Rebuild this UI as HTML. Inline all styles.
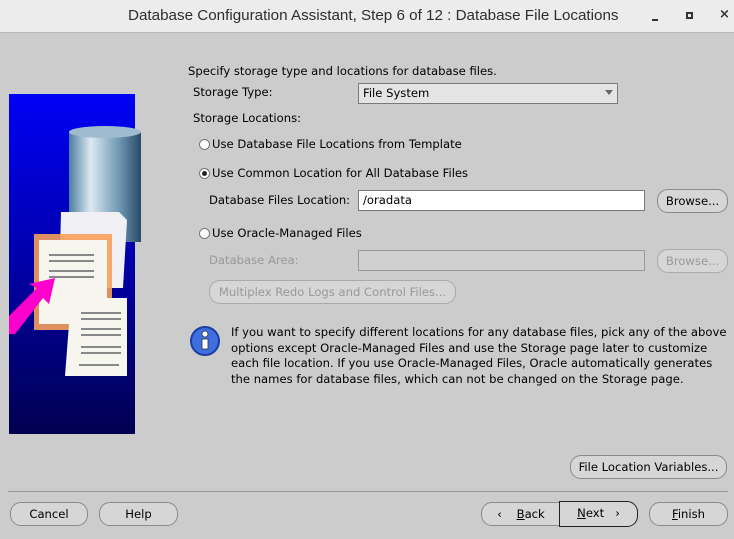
<!DOCTYPE html>
<html><head><style>
*{margin:0;padding:0;box-sizing:border-box}
body{width:734px;height:539px;background:#cccccc;font-family:"DejaVu Sans",sans-serif;font-size:11.6px;color:#000;position:relative;overflow:hidden}
.a{position:absolute;white-space:nowrap}
.title{position:absolute;left:0;top:0;width:734px;height:33px;background:#ececec;border-bottom:1px solid #b8b8b8;}
.btn{position:absolute;height:24px;border:1px solid #8a8a8a;border-radius:11px;background:#d6d6d6;text-align:center;line-height:22px;font-size:11.6px}
.dis{color:#999;border-color:#aaa}
.field{position:absolute;height:21px;background:#fff;border:1px solid #7a7a7a;padding-left:4px;line-height:19px}
.radio{position:absolute;width:11px;height:11px;border-radius:50%;background:#fff;border:1px solid #777}
</style></head><body>
<div class="title"></div>
<div class="a" style="left:128px;top:7px;font-size:15.2px;color:#2e2e2e;font-family:'Liberation Sans',sans-serif">Database Configuration Assistant, Step 6 of 12 : Database File Locations</div>
<div class="a" style="left:652px;top:19px;width:6px;height:2px;background:#333"></div>
<div class="a" style="left:686px;top:12px;width:7px;height:7px;border:2px solid #333"></div>
<div class="a" style="left:719px;top:7px;font-size:13px;color:#333;font-weight:bold">×</div>

<svg class="a" style="left:9px;top:94px" width="134" height="340">
<defs><linearGradient id="bg" x1="0" y1="0" x2="0" y2="1"><stop offset="0" stop-color="#0000f6"/><stop offset="0.5" stop-color="#0000a8"/><stop offset="1" stop-color="#000050"/></linearGradient>
<linearGradient id="cy" x1="0" x2="1"><stop offset="0" stop-color="#4a7da0"/><stop offset="0.3" stop-color="#dce9f2"/><stop offset="0.7" stop-color="#6d97b3"/><stop offset="1" stop-color="#2a4a66"/></linearGradient></defs>
<rect width="126" height="340" fill="url(#bg)"/>
<rect x="60" y="38" width="72" height="110" fill="url(#cy)"/>
<ellipse cx="96" cy="38" rx="36" ry="6" fill="#9fbbd0"/>
<polygon points="52,24 110,24 118,32 114,100 50,100" transform="translate(0,94)" fill="#f0f0f4"/>
<rect x="25" y="140" width="78" height="96" fill="#f7a05a" opacity="0.9"/>
<rect x="30" y="146" width="68" height="84" fill="#f6f6ee"/>
<polygon points="62,204 118,204 118,282 56,282" fill="#f6f6ee"/>
<g fill="#888"><rect x="40" y="160" width="45" height="2"/><rect x="40" y="166" width="45" height="2"/><rect x="40" y="176" width="45" height="2"/><rect x="40" y="182" width="45" height="2"/><rect x="72" y="218" width="40" height="2"/><rect x="72" y="224" width="40" height="2"/><rect x="72" y="234" width="40" height="2"/><rect x="72" y="240" width="40" height="2"/><rect x="72" y="252" width="40" height="2"/><rect x="72" y="258" width="40" height="2"/><rect x="70" y="270" width="40" height="2"/></g>
<polygon points="0,222 28,194 20,190 46,184 40,210 34,204 6,240 0,240" fill="#ff00cc"/>
</svg>

<div class="a" style="left:188px;top:64px">Specify storage type and locations for database files.</div>
<div class="a" style="left:193px;top:85px">Storage Type:</div>
<div class="field" style="left:358px;top:83px;width:260px;background:#e4e4e4">File System</div>
<div class="a" style="left:605px;top:90px;border:4px solid transparent;border-top:5px solid #666"></div>
<div class="a" style="left:193px;top:111px">Storage Locations:</div>
<div class="radio" style="left:199px;top:139px"></div>
<div class="a" style="left:212px;top:137px">Use Database File Locations from Template</div>
<div class="radio" style="left:199px;top:168px"><div style="margin:2px;width:5px;height:5px;border-radius:50%;background:#222"></div></div>
<div class="a" style="left:212px;top:166px">Use Common Location for All Database Files</div>
<div class="a" style="left:209px;top:193px">Database Files Location:</div>
<div class="field" style="left:358px;top:190px;width:287px">/oradata</div>
<div class="btn" style="left:657px;top:189px;width:71px">Browse...</div>
<div class="radio" style="left:199px;top:228px"></div>
<div class="a" style="left:212px;top:226px">Use Oracle-Managed Files</div>
<div class="a" style="left:209px;top:253px;color:#999">Database Area:</div>
<div class="field" style="left:358px;top:250px;width:287px;background:#d0d0d0;border-color:#999"></div>
<div class="btn dis" style="left:657px;top:249px;width:71px">Browse...</div>
<div class="btn dis" style="left:209px;top:280px;width:247px">Multiplex Redo Logs and Control Files...</div>
<svg class="a" style="left:189px;top:325px" width="32" height="32"><circle cx="16" cy="16" r="14" fill="#3f6ee0" stroke="#1b3ca0" stroke-width="2"/><rect x="13" y="14" width="6" height="10" fill="#fff" stroke="#333" stroke-width=".8"/><circle cx="16" cy="9" r="3" fill="#fff" stroke="#333" stroke-width=".8"/></svg>
<div class="a" style="left:231px;top:325px;line-height:15.5px">If you want to specify different locations for any database files, pick any of the above<br>options except Oracle-Managed Files and use the Storage page later to customize<br>each file location. If you use Oracle-Managed Files, Oracle automatically generates<br>the names for database files, which can not be changed on the Storage page.</div>
<div class="btn" style="left:570px;top:455px;width:157px">File Location Variables...</div>
<div class="a" style="left:8px;top:491px;width:720px;height:1px;background:#999"></div>
<div class="btn" style="left:10px;top:502px;width:78px">Cancel</div>
<div class="btn" style="left:99px;top:502px;width:79px">Help</div>
<div class="btn" style="left:481px;top:502px;width:80px;border-radius:11px 0 0 11px">&lsaquo;&nbsp;&nbsp;&nbsp; <u>B</u>ack</div>
<div class="btn" style="left:559px;top:501px;width:79px;height:26px;border:1.5px solid #222;border-radius:0 11px 11px 0"><u>N</u>ext &nbsp;&nbsp;&rsaquo;</div>
<div class="btn" style="left:649px;top:502px;width:79px"><u>F</u>inish</div>
</body></html>
